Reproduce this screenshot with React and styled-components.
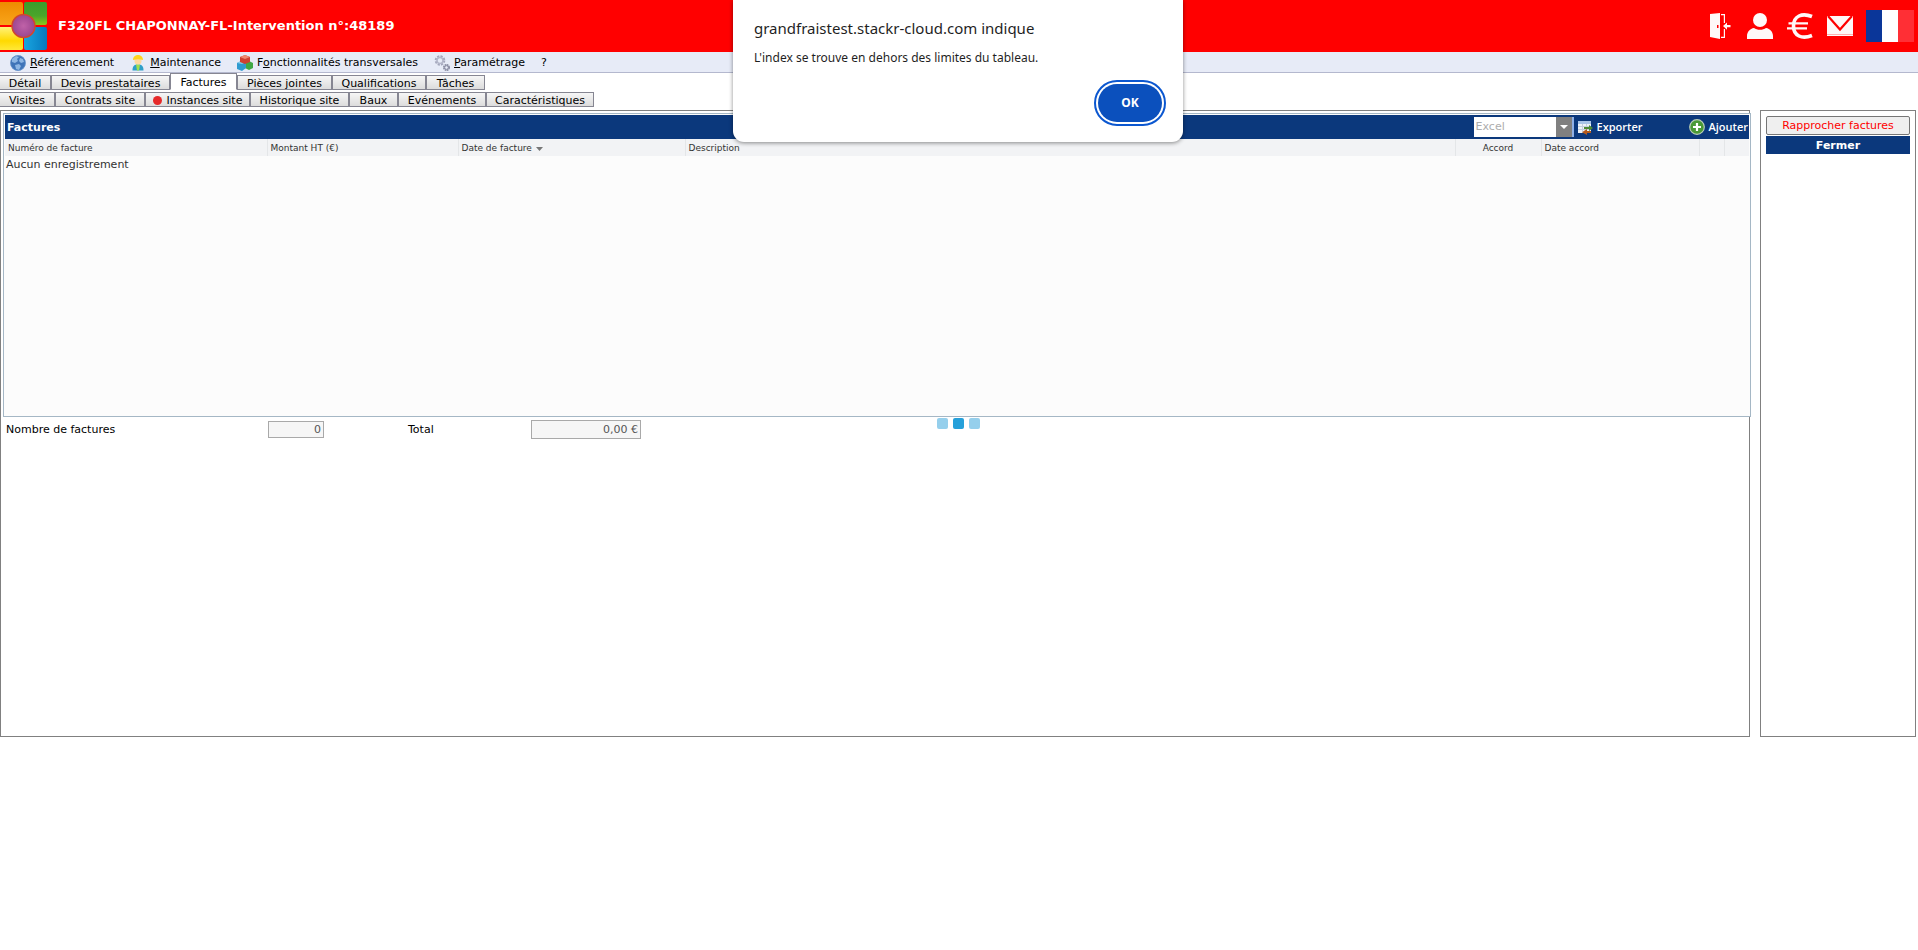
import React from "react";
import styled, { createGlobalStyle } from "styled-components";

const Global = createGlobalStyle`
  *, *::before, *::after { box-sizing: border-box; }
  body {
    margin: 0;
    background: #fff;
    color: #000;
    font: 11px/14px "DejaVu Sans", Verdana, sans-serif;
  }
  button, input, select { font: inherit; margin: 0; }
`;

const Header = styled.header`
  display: flex;
  align-items: center;
  height: 52px;
  padding-right: 4px;
  background: #ff0000;
`;
const Logo = styled.svg`
  width: 48px;
  height: 52px;
  flex: none;
`;
const Title = styled.h1`
  flex: 1;
  margin: 0 0 0 10px;
  font-size: 13px;
  line-height: 16px;
  color: #fff;
  white-space: nowrap;
`;
const HeaderIcons = styled.nav`
  display: flex;
  align-items: center;
  gap: 12px;
`;
const IconLink = styled.a`
  display: flex;
  justify-content: center;
  min-width: 28px;
  height: ${(p) => p.$h || 26}px;
  svg { display: block; height: 100%; }
`;

const MenuBar = styled.nav`
  display: flex;
  align-items: center;
  height: 21px;
  padding: 2px 0 0 10px;
  background: #e7ebf7;
  border-bottom: 1px solid #b4b8ce;
`;
const MenuItem = styled.a`
  display: flex;
  align-items: center;
  gap: 4px;
  margin-right: 16px;
  color: #000;
  text-decoration: none;
  white-space: nowrap;
  svg { width: 16px; height: 16px; flex: none; }
`;

const TabRow = styled.div`
  display: flex;
  align-items: flex-end;
  height: 17px;
`;
const Tab = styled.button`
  display: flex;
  align-items: center;
  justify-content: center;
  gap: 5px;
  width: ${(p) => p.$w}px;
  height: ${(p) => (p.$active ? 17 : 15)}px;
  padding: 1px 0 0;
  border: 1px solid #868692;
  border-bottom-color: ${(p) => (p.$active ? "#fff" : "#868692")};
  background: ${(p) => (p.$active ? "#fff" : "linear-gradient(#f6f6f6, #dcdcdc)")};
  color: #000;
  line-height: 13px;
  white-space: nowrap;
  &:first-child { border-left: 0; }
`;
const Dot = styled.span`
  width: 9px;
  height: 9px;
  border-radius: 50%;
  background: #e62a2a;
`;

const Columns = styled.div`
  display: flex;
  gap: 10px;
  margin: 3px 2px 0 0;
`;
const MainPanel = styled.main`
  flex: 1;
  min-width: 0;
  min-height: 627px;
  padding: 2px 0 0 2px;
  border: 1px solid #808080;
`;
const SidePanel = styled.aside`
  display: flex;
  flex-direction: column;
  gap: 1px;
  width: 156px;
  padding: 5px;
  border: 1px solid #808080;
`;
const SideButton = styled.button`
  height: ${(p) => (p.$primary ? 18 : 19)}px;
  padding: 1px 0 0;
  border: ${(p) => (p.$primary ? "0" : "1px solid #767676")};
  border-radius: ${(p) => (p.$primary ? 0 : 2)}px;
  background: ${(p) => (p.$primary ? "#0b387c" : "#efefef")};
  color: ${(p) => (p.$primary ? "#fff" : "#ff0000")};
  font-weight: ${(p) => (p.$primary ? "bold" : "normal")};
`;

const GridFrame = styled.section`
  min-height: 304px;
  margin-right: -2px;
  padding: 1px;
  border: 1px solid #a5b7c5;
  background: #fcfcfc;
`;
const GridBar = styled.div`
  display: flex;
  align-items: center;
  height: 24px;
  padding: 0 1px 0 2px;
  background: #0b387c;
  color: #fff;
`;
const GridTitle = styled.h2`
  flex: 1;
  margin: 0;
  padding-top: 2px;
  font-size: 11px;
  line-height: 14px;
`;
const SelectBox = styled.div`
  display: flex;
  position: relative;
  width: 100px;
  height: 20px;
  background: linear-gradient(90deg, #fff 82px, #808080 82px, #808080 98px, #8fb0e6 98px);
  svg {
    position: absolute;
    right: 6px;
    top: 8px;
    pointer-events: none;
  }
`;
const Select = styled.select`
  width: 100%;
  padding: 0 2px;
  appearance: none;
  border: 0;
  background: transparent;
  color: #adadad;
`;
const BarButton = styled.button`
  display: flex;
  align-items: center;
  gap: 4px;
  margin-left: ${(p) => p.$ml}px;
  padding: 0;
  border: 0;
  background: none;
  color: #fff;
  font-family: "Open Sans", sans-serif;
  font-weight: 600;
  svg { flex: none; }
`;

const Table = styled.table`
  width: 100%;
  table-layout: fixed;
  border-collapse: collapse;
  th {
    height: 17px;
    padding: 0 3px;
    border-left: 1px solid #e4e6e8;
    background: #f2f3f5;
    color: #333;
    font-size: 9px;
    line-height: 12px;
    font-weight: normal;
    text-align: left;
    white-space: nowrap;
  }
  th:first-child { border-left: 0; }
  th.center { text-align: center; }
  th svg { margin-left: 4px; }
  td {
    height: 17px;
    padding: 0 1px;
    color: #333;
  }
`;

const Totals = styled.form`
  display: flex;
  align-items: center;
  height: 25px;
  padding-left: 3px;
`;
const TotalLabel = styled.label`
  width: ${(p) => p.$w}px;
`;
const Amount = styled.input`
  width: ${(p) => p.$w}px;
  height: ${(p) => p.$h}px;
  margin-right: ${(p) => p.$mr || 0}px;
  padding: 0 2px;
  border: 1px solid #a9a9a9;
  border-radius: 0;
  background: #f6f6f6;
  color: #555;
  text-align: right;
`;

const Loader = styled.div`
  position: absolute;
  left: calc(50% - 22px);
  top: 418px;
  display: flex;
  gap: 5px;
`;
const Square = styled.i`
  width: 11px;
  height: 11px;
  border-radius: 2px;
  background: ${(p) => (p.$on ? "#25a0da" : "#95cfec")};
`;

const Dialog = styled.div`
  position: absolute;
  top: 0;
  left: calc(50% - 226px);
  display: flex;
  flex-direction: column;
  width: 450px;
  height: 142px;
  padding: 17px 21px 16px;
  border-radius: 0 0 11px 11px;
  background: #fff;
  color: #1f1f1f;
  box-shadow: 0 1px 4px rgba(0, 0, 0, 0.45);
  font-family: "Noto Sans", "Segoe UI", sans-serif;
`;
const DialogTitle = styled.h2`
  margin: 0;
  font-size: 15px;
  line-height: 22px;
  font-weight: normal;
  white-space: nowrap;
`;
const DialogText = styled.p`
  margin: 10px 0 0;
  font-size: 12px;
  line-height: 18px;
  white-space: nowrap;
`;
const OkButton = styled.button`
  align-self: flex-end;
  width: 64px;
  height: 38px;
  margin: auto 0 4px;
  padding: 0;
  border: 0;
  border-radius: 19px;
  outline: 2px solid #0b57d0;
  outline-offset: 2px;
  background: #0b50bd;
  color: #fff;
  font-size: 12px;
  font-weight: bold;
`;

const LogoArt = () => (
  <Logo viewBox="0 0 48 52" aria-hidden="true">
    <defs>
      <linearGradient id="lo" x2="0" y2="1"><stop offset="0" stopColor="#ee8a00" /><stop offset="1" stopColor="#f9a51a" /></linearGradient>
      <linearGradient id="lg" x2="0" y2="1"><stop offset="0" stopColor="#3b9c2c" /><stop offset=".6" stopColor="#4aa52a" /><stop offset="1" stopColor="#8cc51c" /></linearGradient>
      <linearGradient id="ly" x2="0" y2="1"><stop offset="0" stopColor="#fff27a" /><stop offset=".6" stopColor="#ffd900" /><stop offset="1" stopColor="#ffe838" /></linearGradient>
      <linearGradient id="lb"><stop offset="0" stopColor="#19a5e0" /><stop offset="1" stopColor="#0678bd" /></linearGradient>
      <radialGradient id="lp"><stop offset="0" stopColor="#c062a8" /><stop offset="1" stopColor="#9b4690" /></radialGradient>
    </defs>
    <rect x="-2" y="2" width="25" height="23" rx="2" fill="url(#lo)" />
    <rect x="24" y="2" width="23" height="23" rx="2" fill="url(#lg)" />
    <rect x="-2" y="27" width="25" height="23" rx="2" fill="url(#ly)" />
    <rect x="24" y="27" width="23" height="23" rx="2" fill="url(#lb)" />
    <circle cx="23.500" cy="26" r="11.500" fill="url(#lp)" stroke="#d2472c" strokeWidth="1.500" />
  </Logo>
);
const Door = () => (
  <svg viewBox="0 0 22 26" fill="#fff8f8" aria-hidden="true">
    <path fillRule="evenodd" d="M1 1 11 0V26L1 24ZM8 12v3h1.500v-3Z" />
    <path d="M12 1h4v9h-1.200V2.200H12ZM14.800 16H16v9h-4v-1.200h2.800Z" />
    <path d="M14 13l4-3.500V12h3.500v2.200H18v2.500Z" />
  </svg>
);
const User = () => (
  <svg viewBox="0 0 26 26" fill="#fff8f8" aria-hidden="true">
    <circle cx="13" cy="7" r="7" />
    <path d="M0 26v-3c0-4 3-7.500 7-8 3 2.400 9 2.400 12 0 4 .5 7 4 7 8v3Z" />
  </svg>
);
const Euro = () => (
  <svg viewBox="0 0 26 26" fill="none" stroke="#fff8f8" aria-hidden="true">
    <path d="M25 3.500C15 -.5 6.500 3 6.500 13S15 26.500 25 22.500" strokeWidth="3.600" />
    <path d="M1.500 10.400H21M0 15.400h20" strokeWidth="2.200" />
  </svg>
);
const Mail = () => (
  <svg viewBox="0 0 26 20" aria-hidden="true">
    <path d="M0 0h26v20H0Z" fill="#fff8f8" />
    <path d="M1 0 13 13.500 25 0" fill="none" stroke="#ff0000" strokeWidth="2.200" />
    <path d="M0 18.500h26" stroke="#ffb0b0" />
  </svg>
);
const Flag = () => (
  <svg viewBox="0 0 48 32" aria-hidden="true">
    <path d="M0 0h16v32H0Z" fill="#0a3699" />
    <path d="M16 0h16v32H16Z" fill="#fff" />
    <path d="M32 0h16v32H32Z" fill="#ff2f35" />
  </svg>
);
const Globe = () => (
  <svg viewBox="0 0 16 16" aria-hidden="true">
    <circle cx="8" cy="8" r="7.700" fill="#3f74b8" />
    <path d="M2 4l4-3 3 1-2 2 1 2-3 2-3-1ZM10 3l3 1 1 3-3 1-2-2ZM5 10l4-1 2 2-2 4-3-1Z" fill="#8db6e4" />
    <circle cx="8" cy="8" r="7.400" fill="none" stroke="#6b9bd2" strokeWidth=".6" />
  </svg>
);
const Worker = () => (
  <svg viewBox="0 0 16 16" aria-hidden="true">
    <path d="M2.500 15.500c0-5 2-6 5.500-6s5.500 1 5.500 6Z" fill="#2f9fc8" />
    <path d="M6 9.500h4l-1 6H7Z" fill="#9fe04a" />
    <circle cx="8" cy="6" r="3.500" fill="#ffd9a0" />
    <path d="M3 5C3 1.500 5.500 0 8 0s5 1.500 5 5c-3-1-7-1-10 0Z" fill="#ffd320" />
  </svg>
);
const Cubes = () => (
  <svg viewBox="0 0 16 16" aria-hidden="true">
    <path d="M8 7l4-1 4 2v5l-4 2-4-2Z" fill="#3fa845" />
    <path d="M0 8l4-2 5 1v6l-4 3-5-2Z" fill="#2f9bd0" />
    <path d="M0 8l4-2 5 1-4 2Z" fill="#86cdea" />
    <path d="M3 2l5-2 5 2v5L8 9 3 7Z" fill="#cf4030" />
    <path d="M3 2l5-2 5 2-5 2Z" fill="#f08a70" />
  </svg>
);
const Gears = () => (
  <svg viewBox="0 0 16 16" fill="none" aria-hidden="true">
    <circle cx="6" cy="5.500" r="4" stroke="#a3a6bb" strokeWidth="2.600" strokeDasharray="2 1.140" />
    <circle cx="6" cy="5.500" r="3" stroke="#b4b7ca" strokeWidth="1.600" />
    <circle cx="12.500" cy="12.500" r="2.500" stroke="#85889e" strokeWidth="2" strokeDasharray="1.500 .46" />
    <circle cx="12.500" cy="12.500" r="1.800" stroke="#9a9db2" />
  </svg>
);
const ExportIcon = () => (
  <svg width="15" height="15" viewBox="0 0 15 15" aria-hidden="true">
    <path d="M0 1h13v12H0Z" fill="#eef3fa" />
    <path d="M0 1h13v3H0Z" fill="#a8c4e8" />
    <path d="M0 6.500h13M0 9.500h13M4.500 4v9M8.500 4v9" stroke="#c5d0de" />
    <path d="M6 7h5V5l4 3-4 3V9H6Z" fill="#4c8a35" />
    <path d="M13 11H9V9l-5 3.200L9 15v-2h4Z" fill="#b45a1c" />
  </svg>
);
const AddIcon = () => (
  <svg width="16" height="16" viewBox="0 0 16 16" aria-hidden="true">
    <circle cx="8" cy="8" r="7.300" fill="#4a9a36" stroke="#b9cdb9" strokeWidth="1.200" />
    <path d="M8 4v8M4 8h8" stroke="#fff" strokeWidth="2.200" />
  </svg>
);

const topTabs = [
  ["Détail", 51], ["Devis prestataires", 119], ["Factures", 67, true],
  ["Pièces jointes", 95], ["Qualifications", 94], ["Tâches", 59],
];
const siteTabs = [
  ["Visites", 55], ["Contrats site", 90], ["Instances site", 105], ["Historique site", 99],
  ["Baux", 49], ["Evénements", 88], ["Caractéristiques", 108],
];

export default function App() {
  return (
    <>
      <Global />
      <Header>
        <LogoArt />
        <Title>F320FL CHAPONNAY-FL-Intervention n°:48189</Title>
        <HeaderIcons>
          <IconLink href="#quitter" aria-label="Quitter"><Door /></IconLink>
          <IconLink href="#compte" aria-label="Compte"><User /></IconLink>
          <IconLink href="#budget" aria-label="Budget"><Euro /></IconLink>
          <IconLink href="#messages" aria-label="Messages" $h={20}><Mail /></IconLink>
          <IconLink href="#langue" aria-label="Français" $h={32}><Flag /></IconLink>
        </HeaderIcons>
      </Header>
      <MenuBar>
        <MenuItem href="#referencement"><Globe /><span><u>R</u>éférencement</span></MenuItem>
        <MenuItem href="#maintenance"><Worker /><span><u>M</u>aintenance</span></MenuItem>
        <MenuItem href="#fonctionnalites"><Cubes /><span>F<u>o</u>nctionnalités transversales</span></MenuItem>
        <MenuItem href="#parametrage"><Gears /><span><u>P</u>aramétrage</span></MenuItem>
        <MenuItem href="#aide">?</MenuItem>
      </MenuBar>
      <TabRow>
        {topTabs.map(([label, w, active]) => (
          <Tab key={label} type="button" $w={w} $active={active}>{label}</Tab>
        ))}
      </TabRow>
      <TabRow>
        {siteTabs.map(([label, w]) => (
          <Tab key={label} type="button" $w={w}>
            {label === "Instances site" && <Dot />}
            {label}
          </Tab>
        ))}
      </TabRow>
      <Columns>
        <MainPanel>
          <GridFrame>
            <GridBar>
              <GridTitle>Factures</GridTitle>
              <SelectBox>
                <Select aria-label="Format d'export" defaultValue="Excel"><option>Excel</option></Select>
                <svg width="8" height="4" viewBox="0 0 8 4" aria-hidden="true"><path d="M0 0h8L4 4Z" fill="#fff" /></svg>
              </SelectBox>
              <BarButton type="button" $ml={4}><ExportIcon />Exporter</BarButton>
              <BarButton type="button" $ml={46}><AddIcon />Ajouter</BarButton>
            </GridBar>
            <Table>
              <colgroup>
                <col width="262" /><col width="191" /><col width="227" /><col />
                <col width="86" /><col width="158" /><col width="25" /><col width="25" />
              </colgroup>
              <thead>
                <tr>
                  <th>Numéro de facture</th>
                  <th>Montant HT (€)</th>
                  <th>
                    Date de facture
                    <svg width="7" height="4" viewBox="0 0 7 4" aria-hidden="true"><path d="M0 0h7L3.500 4Z" fill="#777" /></svg>
                  </th>
                  <th>Description</th>
                  <th className="center">Accord</th>
                  <th>Date accord</th>
                  <th />
                  <th />
                </tr>
              </thead>
              <tbody>
                <tr><td colSpan={8}>Aucun enregistrement</td></tr>
              </tbody>
            </Table>
          </GridFrame>
          <Totals>
            <TotalLabel htmlFor="count" $w={262}>Nombre de factures</TotalLabel>
            <Amount id="count" $w={56} $h={17} $mr={84} readOnly value="0" />
            <TotalLabel htmlFor="total" $w={123}>Total</TotalLabel>
            <Amount id="total" $w={110} $h={19} readOnly value="0,00 €" />
          </Totals>
        </MainPanel>
        <SidePanel>
          <SideButton type="button">Rapprocher factures</SideButton>
          <SideButton type="button" $primary>Fermer</SideButton>
        </SidePanel>
      </Columns>
      <Loader><Square /><Square $on /><Square /></Loader>
      <Dialog role="alertdialog" aria-labelledby="dialog-title">
        <DialogTitle id="dialog-title">grandfraistest.stackr-cloud.com indique</DialogTitle>
        <DialogText>L'index se trouve en dehors des limites du tableau.</DialogText>
        <OkButton type="button">OK</OkButton>
      </Dialog>
    </>
  );
}
